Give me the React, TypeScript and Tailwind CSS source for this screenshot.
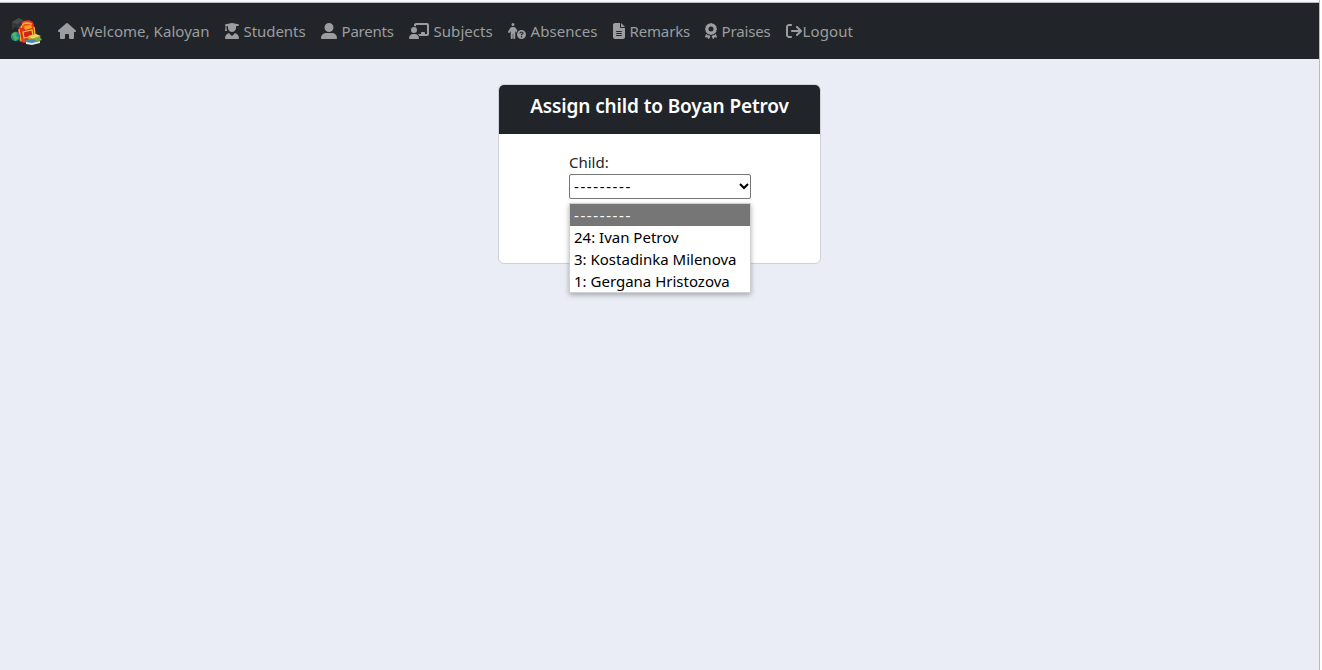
import type { IconType } from "react-icons";
import {
  FaHouse,
  FaUserGraduate,
  FaUserLarge,
  FaChalkboardUser,
  FaPersonCircleQuestion,
  FaFileLines,
  FaAward,
  FaArrowRightFromBracket,
} from "react-icons/fa6";

type NavItem = { label: string; icon: IconType; size: string; width: string; tracking: string };

const navItems: NavItem[] = [
  { label: "Welcome, Kaloyan", icon: FaHouse, size: "w-[18px] mr-[4.5px]", width: "w-[167px]", tracking: "tracking-[0.05px]" },
  { label: "Students", icon: FaUserGraduate, size: "w-[14px] mr-[4.5px]", width: "w-[96px]", tracking: "tracking-[-0.05px]" },
  { label: "Parents", icon: FaUserLarge, size: "w-[16px] mr-[4.5px]", width: "w-[88px]", tracking: "tracking-[-0.2px]" },
  { label: "Subjects", icon: FaChalkboardUser, size: "w-[20px] mr-[4.5px]", width: "w-[99px]", tracking: "tracking-[0.05px]" },
  { label: "Absences", icon: FaPersonCircleQuestion, size: "w-[18px] mr-[4.5px]", width: "w-[105px]", tracking: "tracking-[0.05px]" },
  { label: "Remarks", icon: FaFileLines, size: "w-[12px] mr-[4.5px]", width: "w-[92px]", tracking: "tracking-[-0.15px]" },
  { label: "Praises", icon: FaAward, size: "w-[12px] mr-[4.5px]", width: "w-[81px]", tracking: "tracking-[-0.15px]" },
  { label: "Logout", icon: FaArrowRightFromBracket, size: "w-[16px] mr-[0.5px]", width: "w-[84px]", tracking: "tracking-[0.1px]" },
];

const options = ["---------", "24: Ivan Petrov", "3: Kostadinka Milenova", "1: Gergana Hristozova"];

function BackpackLogo() {
  return (
    <svg viewBox="0 0 32 32" className="h-8 w-8 shrink-0">
      <path d="m10 9 3-3 6-1 4 2 2 7 1 9-5 5-11-1-3-7z" fill="#d9301c" />
      <path d="m11 8 4-2 6 1 2 5-8 2-4-2z" fill="#ee4b22" />
      <path d="M11 13q1-5 6-5l5 1M24 12l1 8M9 14l2 12" fill="none" stroke="#f7b32b" strokeWidth="1.3" />
      <path d="m14 11 7-1 1 3-7 2z" fill="#f9a21f" />
      <path d="m13 17 9-2 1 6-9 2z" fill="#cf2519" stroke="#f9c234" strokeWidth="1.2" />
      <path d="m12 24 6 1-1 3-5-1z" fill="#e84a20" />
      <path d="m1.500 7 7-4 5 2-6 5z" fill="#454a4f" />
      <path d="m4 9 4 1 4-3v3l-4 3-4-1z" fill="#33383c" />
      <path d="M3 8v6" stroke="#6e5835" strokeWidth=".8" />
      <circle cx="5.500" cy="21.500" r="4.700" fill="#1688a8" />
      <path d="M2 19q3-3 5-1l-1 3 3 2-4 3-2-4z" fill="#52b64c" />
      <path d="m18 21 8-2 5 2-9 3z" fill="#edd65b" />
      <path d="m18 22 4 2 8-3v2l-8 3-4-2z" fill="#d5a72d" />
      <path d="m19 25 11-3 2 3-10 3z" fill="#76ad47" />
      <path d="m16 25 7-1 5 3-6 2-6-2z" fill="#438bb4" />
      <path d="m16 27 6 1 8-2v2l-8 2-6-1z" fill="#e6ebe7" />
    </svg>
  );
}

function Navbar() {
  return (
    <nav className="flex h-[56px] items-center bg-[#212529] pl-[10px]">
      <BackpackLogo />
      <ul className="ml-2 flex">
        {navItems.map(({ label, icon: Icon, size, width, tracking }) => (
          <li key={label} className={`${width} h-6 shrink-0 pl-2`}>
            <a className="flex h-6 items-center whitespace-nowrap text-[15px] text-[#9b9d9f]">
              <Icon className={`${size} h-4 shrink-0`} />
              <span className={tracking}>{label}</span>
            </a>
          </li>
        ))}
      </ul>
    </nav>
  );
}

export default function App() {
  return (
    <div className="h-[670px] overflow-hidden bg-white font-['Noto_Sans','Open_Sans',sans-serif] text-[15px] text-[#212529]">
      <div className="h-full w-[1320px] border-r border-[#b9bbbe] bg-[#eaedf5]">
        <div className="h-[3px] border-b border-[#b9bbbe] bg-[#f5f7f8]" />
        <Navbar />
        <main className="flex justify-center pt-[25px]">
          <section className="h-[180px] w-[323px] rounded-[6px] border border-[#cfd1d8] bg-white">
            <header className="flex h-[49px] justify-center rounded-t-[5px] bg-[#212529] pt-[9px]">
              <h1 className="whitespace-nowrap text-[19px] leading-6 font-semibold tracking-[-0.12px] text-white">
                Assign child to Boyan Petrov
              </h1>
            </header>
            <div className="ml-[70px] w-[182px] pt-4">
              <label className="block h-6 leading-6">Child:</label>
              <div className="relative">
                <button className="flex h-[25px] w-[182px] items-center justify-between rounded-[2px] border border-[#767676] bg-white pl-1 text-black">
                  <span className="tracking-[1.6px]">---------</span>
                  <svg viewBox="0 0 12 8" className="mb-0.5 h-2 w-3">
                    <path d="m2 2 4 4 4-4" fill="none" stroke="black" strokeWidth="2" />
                  </svg>
                </button>
                <ul className="absolute top-[29px] left-0 w-[182px] border border-[#d0d1d4] bg-white text-black shadow-[0_2px_5px_rgba(0,0,0,0.3)]">
                  {options.map((option, index) => (
                    <li
                      key={option}
                      className={
                        index === 0
                          ? "h-[22px] bg-[#767676] pl-1 leading-[22px] tracking-[1.6px] text-white"
                          : "h-[22px] pl-1 leading-[22px] whitespace-nowrap"
                      }
                    >
                      {option}
                    </li>
                  ))}
                </ul>
              </div>
            </div>
          </section>
        </main>
      </div>
    </div>
  );
}
